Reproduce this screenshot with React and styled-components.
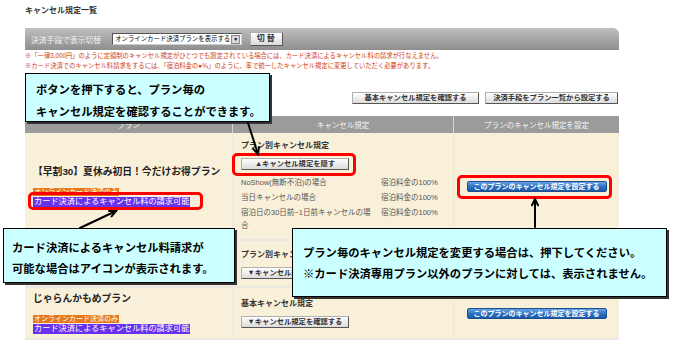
import React from 'react'
import styled, { createGlobalStyle } from 'styled-components'

const GlobalStyle = createGlobalStyle`
  html, body {
    margin: 0;
    padding: 0;
    background: #fff;
  }
  body {
    font-family: "Liberation Sans", "Noto Sans CJK JP", sans-serif;
    color: #333;
  }
`

const plans = [
  {
    name: '【早割30】夏休み初日！今だけお得プラン',
    heading: 'プラン別キャンセル規定',
    toggle: '▲キャンセル規定を隠す',
    open: true,
    badges: true,
    setButton: true,
    height: 108,
  },
  {
    name: '',
    heading: 'プラン別キャンセル規定',
    toggle: '▼キャンセル規定を確認する',
    badges: false,
    setButton: false,
    height: 47,
  },
  {
    name: 'じゃらんかもめプラン',
    heading: '基本キャンセル規定',
    toggle: '▼キャンセル規定を確認する',
    badges: true,
    setButton: true,
    height: 52,
  },
]

const rules = [
  ['NoShow(無断不泊)の場合', '宿泊料金の100%'],
  ['当日キャンセルの場合', '宿泊料金の100%'],
  ['宿泊日の30日前~1日前キャンセルの場合', '宿泊料金の100%'],
]

const Arrow = ({ x1, y1, x2, y2 }) => {
  const a = Math.atan2(y2 - y1, x2 - x1)
  const len = 7
  const spread = 0.45
  const p1 = [x2 - len * Math.cos(a - spread), y2 - len * Math.sin(a - spread)]
  const p2 = [x2 - len * Math.cos(a + spread), y2 - len * Math.sin(a + spread)]
  return (
    <g stroke="#000" strokeWidth="2" fill="none" strokeLinecap="round">
      <line x1={x1} y1={y1} x2={x2} y2={y2} />
      <polyline points={`${p1.join(',')} ${x2},${y2} ${p2.join(',')}`} />
    </g>
  )
}

export default function App() {
  return (
    <Page>
      <GlobalStyle />
      <Content>
        <Title>キャンセル規定一覧</Title>
        <SwitchBar>
          <BarLabel>決済手段で表示切替</BarLabel>
          <FakeSelect>
            <SelectText>オンラインカード決済プランを表示する</SelectText>
            <SelectArrow>▼</SelectArrow>
          </FakeSelect>
          <GrayButton $width={33} $height={14} $size={8} $spacing={2}>切替</GrayButton>
        </SwitchBar>
        <Notes>
          <p>※「一律3,000円」のように定額制のキャンセル規定がひとつでも設定されている場合には、カード決済によるキャンセル料の請求が行なえません。</p>
          <p>※カード決済でのキャンセル料請求をするには、「宿泊料金の●％」のように、率で統一したキャンセル規定に変更していただく必要があります。</p>
        </Notes>
        <ButtonRow>
          <GrayButton $width={127}>基本キャンセル規定を確認する</GrayButton>
          <GrayButton $width={133}>決済手段をプラン一覧から設定する</GrayButton>
        </ButtonRow>
        <Table>
          <HeadCell>プラン</HeadCell>
          <HeadCell>キャンセル規定</HeadCell>
          <HeadCell>プランのキャンセル規定を設定</HeadCell>
          {plans.map((p, i) => (
            <React.Fragment key={i}>
              <PlanCell $height={p.height}>
                {p.name && <PlanName>{p.name}</PlanName>}
                {p.badges && (
                  <Badges>
                    <Badge $color="#e8781a" $size={7} $line={8}>オンラインカード決済のみ</Badge>
                    <Badge $color="#6a30f0" $size={8.2} $line={10}>カード決済によるキャンセル料の請求可能</Badge>
                  </Badges>
                )}
              </PlanCell>
              <RuleCell $height={p.height}>
                <RuleHeading>{p.heading}</RuleHeading>
                <GrayButton $width={108}>{p.toggle}</GrayButton>
                {p.open && (
                  <RuleList>
                    {rules.map(([label, value]) => (
                      <React.Fragment key={label}>
                        <span>{label}</span>
                        <span>{value}</span>
                      </React.Fragment>
                    ))}
                  </RuleList>
                )}
              </RuleCell>
              <SetCell $height={p.height}>
                {p.setButton && <BlueButton>このプランのキャンセル規定を設定する</BlueButton>}
              </SetCell>
            </React.Fragment>
          ))}
        </Table>
      </Content>

      <Highlight style={{ left: 28, top: 192, width: 175, height: 18 }} />
      <Highlight style={{ left: 232, top: 153, width: 124, height: 23 }} />
      <Highlight style={{ left: 457, top: 175, width: 155, height: 24 }} />

      <Callout style={{ left: 25, top: 73, width: 245, height: 49 }} $pad="4px 0 0 10px">
        <p>ボタンを押下すると、プラン毎の</p>
        <p>キャンセル規定を確認することができます。</p>
      </Callout>
      <Callout style={{ left: 3, top: 228, width: 232, height: 55 }} $pad="8px 0 0 8px" $line={21}>
        <p>カード決済によるキャンセル料請求が</p>
        <p>可能な場合はアイコンが表示されます。</p>
      </Callout>
      <Callout style={{ left: 292, top: 228, width: 375, height: 69 }} $pad="13px 0 0 10px" $line={21}>
        <p>プラン毎のキャンセル規定を変更する場合は、押下してください。</p>
        <p>※カード決済専用プラン以外のプランに対しては、表示されません。</p>
      </Callout>

      <Arrows width="677" height="346" viewBox="0 0 677 346">
        <Arrow x1={248} y1={123} x2={258} y2={154} />
        <Arrow x1={80} y1={228} x2={116} y2={211} />
        <Arrow x1={535} y1={227} x2={535} y2={199} />
      </Arrows>
    </Page>
  )
}

const Page = styled.div`
  position: relative;
  width: 677px;
  height: 346px;
  overflow: hidden;
  padding: 4px 0 0 25px;
  box-sizing: border-box;
`

const Content = styled.div`
  width: 594px;
`

const Title = styled.h1`
  margin: 0;
  font-size: 8px;
  line-height: 14px;
  font-weight: bold;
  color: #333;
`

const SwitchBar = styled.div`
  margin-top: 10px;
  height: 22px;
  display: flex;
  align-items: center;
  padding-left: 6px;
  border-top-right-radius: 6px;
  background: linear-gradient(#bfbfbf, #8e8e8e);
`

const BarLabel = styled.span`
  font-size: 7.8px;
  color: #f2f2f2;
  margin-right: 11px;
  white-space: nowrap;
`

const FakeSelect = styled.div`
  display: flex;
  align-items: center;
  justify-content: space-between;
  width: 130px;
  height: 12px;
  box-sizing: border-box;
  background: #fff;
  border: 1px solid #555;
  border-right-color: #ccc;
  border-bottom-color: #ccc;
  padding-left: 2px;
  margin-right: 8px;
`

const SelectText = styled.span`
  font-size: 6.4px;
  line-height: 10px;
  color: #000;
  white-space: nowrap;
  overflow: hidden;
`

const SelectArrow = styled.span`
  flex: none;
  width: 9px;
  height: 9px;
  margin-right: 1px;
  display: flex;
  align-items: center;
  justify-content: center;
  background: #d8d8d8;
  border: 1px solid #888;
  box-sizing: border-box;
  font-size: 5px;
  color: #000;
`

const GrayButton = styled.button`
  flex: none;
  width: ${p => p.$width}px;
  height: ${p => p.$height || 12}px;
  padding: 0;
  box-sizing: border-box;
  font-family: inherit;
  font-size: ${p => p.$size || 7.3}px;
  letter-spacing: ${p => p.$spacing || 0}px;
  font-weight: bold;
  color: #333;
  line-height: 1;
  background: linear-gradient(#ffffff, #dcdcdc);
  border: 1px solid #b0b0b0;
  border-right-color: #555;
  border-bottom-color: #555;
  border-radius: 1px;
  white-space: nowrap;
`

const Notes = styled.div`
  margin-top: 1px;
  font-size: 6.3px;
  line-height: 9.5px;
  color: #d23c10;
  white-space: nowrap;
  p {
    margin: 0;
  }
`

const ButtonRow = styled.div`
  display: flex;
  justify-content: flex-end;
  gap: 6px;
  margin-top: 22px;
  padding-right: 1px;
`

const Table = styled.div`
  margin-top: 12px;
  display: grid;
  grid-template-columns: 207px 221px 166px;
`

const HeadCell = styled.div`
  height: 17px;
  background: #9b9b9b;
  color: #f4f4f4;
  font-size: 7.5px;
  display: flex;
  align-items: center;
  justify-content: center;
  & + & {
    border-left: 1px solid #d6d6d6;
  }
`

const BodyCell = styled.div`
  height: ${p => p.$height}px;
  box-sizing: border-box;
  background: #f9f0d9;
  border-bottom: 2px solid #ebe8e2;
  display: flex;
  flex-direction: column;
  justify-content: center;
`

const PlanCell = styled(BodyCell)`
  padding-left: 8px;
`

const RuleCell = styled(BodyCell)`
  padding-left: 8px;
  border-left: 1px solid #ece9e2;
  align-items: flex-start;
`

const SetCell = styled(BodyCell)`
  border-left: 1px solid #ece9e2;
  align-items: center;
`

const PlanName = styled.div`
  font-size: 9.8px;
  line-height: 14px;
  font-weight: bold;
  color: #222;
  white-space: nowrap;
`

const Badges = styled.div`
  margin-top: 9px;
  display: flex;
  flex-direction: column;
  align-items: flex-start;
  gap: 1px;
`

const Badge = styled.span`
  background: ${p => p.$color};
  color: #fff;
  font-size: ${p => p.$size}px;
  line-height: ${p => p.$line}px;
  padding: 0 1px;
  white-space: nowrap;
`

const RuleHeading = styled.div`
  font-size: 8px;
  line-height: 12px;
  font-weight: bold;
  color: #333;
  margin-bottom: 6px;
`

const RuleList = styled.div`
  margin-top: 6px;
  display: grid;
  grid-template-columns: 134px auto;
  column-gap: 6px;
  row-gap: 2px;
  font-size: 7.5px;
  line-height: 13px;
  color: #555;
`

const BlueButton = styled.button`
  width: 140px;
  height: 11px;
  padding: 0;
  font-family: inherit;
  font-size: 7px;
  line-height: 1;
  font-weight: bold;
  color: #fff;
  background: linear-gradient(#66a3e6, #2a6fc0 55%, #1a5aa8);
  border: 1px solid #1e4f8c;
  border-radius: 2px;
  white-space: nowrap;
`

const Highlight = styled.div`
  position: absolute;
  box-sizing: border-box;
  border: 3px solid #f00;
  border-radius: 5px;
`

const Callout = styled.div`
  position: absolute;
  box-sizing: border-box;
  background: #ccffff;
  border: 1px solid #000;
  box-shadow: 2px 2px 0 #333;
  padding: ${p => p.$pad};
  font-family: "Noto Sans CJK JP", sans-serif;
  font-size: 11.3px;
  font-weight: bold;
  line-height: ${p => p.$line || 22}px;
  color: #000;
  white-space: nowrap;
  p {
    margin: 0;
  }
`

const Arrows = styled.svg`
  position: absolute;
  left: 0;
  top: 0;
  pointer-events: none;
`
